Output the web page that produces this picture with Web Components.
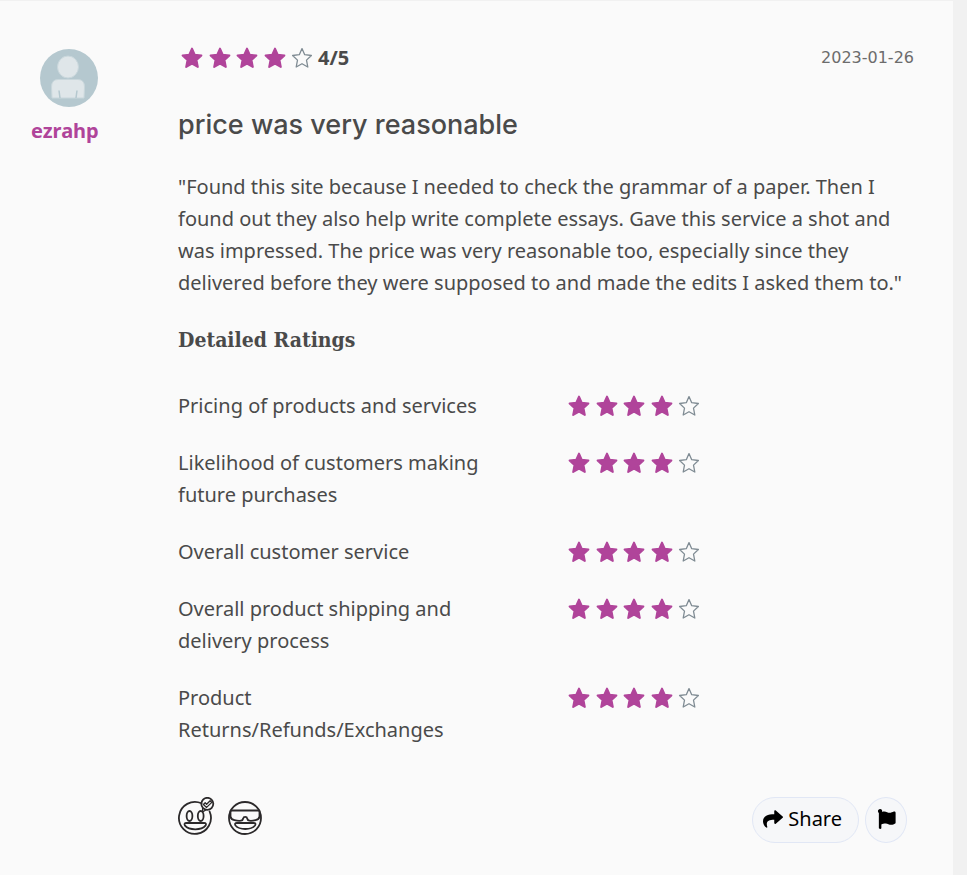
<!DOCTYPE html>
<html lang="en">
<head>
<meta charset="utf-8">
<title>Customer review</title>
<style>
body { margin: 0; background: #f1f1f1; color: #4a4a4a; font: 20px/32px "Noto Sans", sans-serif; }
</style>
</head>
<body>
<review-card></review-card>

<template id="star-rating">
<style>
:host { display: flex; justify-content: space-between; width: 132px; }
svg { width: 22px; height: 22px; fill: #b0449a; stroke: #b0449a; stroke-width: 2; stroke-linejoin: round; }
svg.empty { fill: none; stroke: #7f8b93; stroke-width: 1.3; }
</style>
</template>

<template id="user-badge">
<style>
:host { display: flex; flex-direction: column; align-items: flex-start; }
svg { width: 58px; height: 58px; margin-left: 9px; }
a { margin-top: 8px; color: #b0449a; font-weight: 700; text-decoration: none; }
</style>
<svg viewBox="0 0 58 58" aria-hidden="true">
<circle cx="29" cy="29" r="29" fill="#b5c8cf"/>
<g fill="#dfe6e9" stroke="#c9d7dc" stroke-width="1">
<ellipse cx="28" cy="18" rx="10.5" ry="11"/>
<path d="M12 49 L11.500 38Q11.500 30.500 18 30.500H38Q44.500 30.500 44.500 38L44 49Z"/>
</g>
<path d="M20 49L19 41.500M36 49L37 41.500" stroke="#b5c8cf" stroke-width="1.500" fill="none"/>
</svg>
<a href="#user"><slot></slot></a>
</template>

<template id="rating-row">
<style>
:host { display: grid; grid-template-columns: 53% auto; align-items: start; justify-content: start; }
.label { max-width: 320px; }
star-rating { height: 32px; align-items: center; }
</style>
<span class="label"><slot></slot></span><star-rating></star-rating>
</template>

<template id="pill-button">
<style>
:host { display: block; }
button { display: flex; align-items: center; gap: 5px; height: 46px; padding: 0 16px 2px 10px; border: 1px solid #e1e7f5; border-radius: 23px; background: #f6f7f9; color: #000; font: inherit; cursor: pointer; }
:host([round]) button { width: 42px; padding: 0 0 2px; justify-content: center; border-radius: 21px / 23px; }
</style>
<button type="button"><slot></slot></button>
</template>

<template id="reaction-icons">
<style>
:host { display: flex; gap: 12px; }
button { display: block; padding: 0; border: 0; background: none; cursor: pointer; }
svg { display: block; height: 38px; fill: none; stroke: #2b292a; stroke-width: 1.8; stroke-linejoin: round; stroke-linecap: round; }
</style>
<button type="button" aria-label="Helpful"><svg width="38" viewBox="0 0 38 38">
<path d="M23.500 6.300A16 16 0 1 0 31.600 14.500"/>
<ellipse cx="11.500" cy="19" rx="2.900" ry="5"/><ellipse cx="22.700" cy="19" rx="2.900" ry="5"/>
<path d="M8.500 26H26Q29 26 27.500 28.700Q24.500 32.300 17.300 32.300Q10 32.300 7 28.700Q5.500 26 8.500 26Z"/>
<circle cx="29.300" cy="6.800" r="6"/>
<path d="M25.400 7.500L27.200 5.800L28.600 7.200L32.100 3.700L33.800 5.400L28.600 10.400Z" stroke-width="1.300"/>
<path d="M24.600 11V15L28.100 12.700" stroke-width="1.300"/>
</svg></button>
<button type="button" aria-label="Cool"><svg width="34" viewBox="0 0 34 38">
<circle cx="17" cy="21" r="16"/>
<path d="M3 13.500H31M2.500 14V19.500Q3 22.500 6.500 23.200Q10 24 13 23.700Q14.800 23.500 15.200 21.500Q15.400 19.800 17.200 19.800Q19 19.800 19.200 21.500Q19.600 23.500 21.400 23.700Q24 24 27.500 23.200Q31 22.500 31.500 19.500V14"/>
<path d="M9 26H25.500Q28.500 26 27 28.500Q24 32 17.300 32Q10.500 32 7.500 28.500Q6 26 9 26Z"/>
</svg></button>
</template>

<template id="review-card">
<style>
:host { display: block; margin-right: 14px; padding: 41px 39px 32px 31px; border-top: 1px solid #f1f1f1; background: #fafafa; }
article { display: grid; grid-template-columns: 147px 1fr; }
user-badge { padding-top: 7px; }
header, .score, footer { display: flex; align-items: center; }
header { justify-content: space-between; height: 32px; }
.score { gap: 5px; margin-left: 3px; font-weight: 700; }
time { font-family: "DejaVu Sans", sans-serif; font-size: 16px; color: #6c6c6c; }
h2, h3, p { margin: 0; }
h2 { margin-top: 33px; font: 500 27px/36px Inter, sans-serif; }
p { margin-top: 28px; }
h3 { margin-top: 25px; font: 700 21px/32px "DejaVu Serif Condensed", "DejaVu Serif", serif; }
.ratings { display: grid; gap: 25px; margin-top: 34px; }
footer { justify-content: space-between; margin-top: 51px; padding-right: 7px; }
.actions { display: flex; gap: 6px; }
reaction-icons { padding-bottom: 8px; }
svg { display: block; }
</style>
<article>
<user-badge>ezrahp</user-badge>
<div>
<header><div class="score"><star-rating></star-rating><span>4/5</span></div><time datetime="2023-01-26">2023-01-26</time></header>
<h2>price was very reasonable</h2>
<p>"Found this site because I needed to check the grammar of a paper. Then I found out they also help write complete essays. Gave this service a shot and was impressed. The price was very reasonable too, especially since they delivered before they were supposed to and made the edits I asked them to."</p>
<h3>Detailed Ratings</h3>
<div class="ratings">
<rating-row>Pricing of products and services</rating-row>
<rating-row>Likelihood of customers making future purchases</rating-row>
<rating-row>Overall customer service</rating-row>
<rating-row>Overall product shipping and delivery process</rating-row>
<rating-row>Product Returns/Refunds/Exchanges</rating-row>
</div>
<footer>
<reaction-icons></reaction-icons>
<div class="actions">
<pill-button><svg width="20" height="20" viewBox="0 0 512 512" aria-hidden="true"><path d="M503.700 189.800L327.700 37.900C312.300 24.500 288 35.300 288 56v80.100C127.400 137.900 0 170.100 0 322.300c0 61.400 39.600 122.300 83.300 154.100 13.700 9.900 33.100-2.500 28.100-18.600C66.100 312.800 132.900 274.300 288 272.100V360c0 20.700 24.300 31.500 39.700 18.200l176-152c11.100-9.600 11.100-26.800 0-36.400z"/></svg><span>Share</span></pill-button>
<pill-button round><svg width="20" height="20" viewBox="0 0 512 512" role="img" aria-label="Report"><path d="M349.600 98.800C304 98.800 267.300 64 211.400 64c-20.700 0-39.200 3.600-56.400 9.700a56 56 0 0 0 3.600-24C156.800 23.300 135 1.700 108.500 .1 76.300-1.900 49.600 23.600 49.600 56c0 19 9.300 35.800 23.500 46v386c0 13.300 10.700 24 24 24h16c13.300 0 24-10.700 24-24v-94.400c28.300-12.100 63.600-22.100 114.400-22.100 45.500 0 82.300 34.800 138.200 34.800 40 0 71.900-13.500 101.700-33.900 6.600-4.500 10.500-12 10.500-20V96c0-23.500-24.400-39-45.600-29.100-34.300 15.900-71.500 31.900-106.700 31.900z"/></svg></pill-button>
</div>
</footer>
</div>
</article>
</template>

<script>
class TemplateElement extends HTMLElement {
  constructor() {
    super();
    const template = document.getElementById(this.localName);
    this.attachShadow({ mode: "open" }).append(template.content.cloneNode(true));
  }
}

class StarRating extends TemplateElement {
  constructor() {
    super();
    for (let i = 0; i < 5; i++) {
      const holder = document.createElement("template");
      holder.innerHTML = `<svg class="${i < 4 ? "full" : "empty"}" viewBox="0 0 22 22" aria-hidden="true"><path d="M11 1.600L13.700 7.700L20.400 8.500L15.500 13.100L16.800 20L11 16.700L5.200 20L6.500 13.100L1.600 8.500L8.300 7.700Z"/></svg>`;
      this.shadowRoot.append(holder.content);
    }
  }
  connectedCallback() {
    this.setAttribute("role", "img");
    this.setAttribute("aria-label", "4 out of 5 stars");
  }
}

customElements.define("star-rating", StarRating);
for (const name of ["user-badge", "rating-row", "pill-button", "reaction-icons", "review-card"]) {
  customElements.define(name, class extends TemplateElement {});
}
</script>
</body>
</html>
